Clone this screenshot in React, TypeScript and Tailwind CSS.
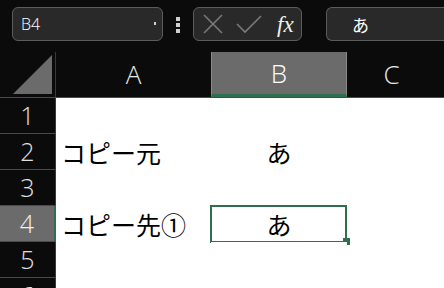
import React from 'react';

const jp = { fontFamily: '"Noto Sans CJK JP", "Noto Sans", sans-serif' };
const latin = { fontFamily: '"Open Sans", "Noto Sans", sans-serif' };

const rows = [
  { n: 1, a: '', b: '' },
  { n: 2, a: 'コピー元', b: 'あ' },
  { n: 3, a: '', b: '' },
  { n: 4, a: 'コピー先①', b: 'あ' },
  { n: 5, a: '', b: '' },
  { n: 6, a: '', b: '' },
];

export default function App() {
  return (
    <div className="w-[444px] h-[288px] overflow-hidden bg-[#0b0b0b] flex flex-col" style={jp}>
      {/* formula bar */}
      <div className="h-[52px] shrink-0 flex items-start pt-[7px] pl-[12px]">
        <div className="w-[151px] h-[34px] rounded-md border border-[#5c5c5c] bg-[#292929] flex items-center pl-[8px] pr-[6px] justify-between">
          <span className="text-white text-[16px] leading-none font-light" style={latin}>B4</span>
          <span className="w-[2px] h-[3px] bg-[#d0d0d0] mt-[-2px]" />
        </div>
        <div className="ml-[13px] mt-[10px] flex flex-col gap-[2px]">
          <span className="w-[4px] h-[4px] bg-[#cfcfcf]" />
          <span className="w-[4px] h-[4px] bg-[#cfcfcf]" />
          <span className="w-[4px] h-[4px] bg-[#cfcfcf]" />
        </div>
        <div className="ml-[13px] w-[109px] h-[34px] rounded-md border border-[#5c5c5c] bg-[#292929] flex items-center pl-[9px]">
          <svg width="20" height="20" viewBox="0 0 20 20" className="shrink-0">
            <path d="M1 1 L19 19 M19 1 L1 19" stroke="#7a7a7a" strokeWidth="1.6" fill="none" />
          </svg>
          <svg width="26" height="20" viewBox="0 0 26 20" className="ml-[13px] shrink-0">
            <path d="M1 10 L9 18 L25 2" stroke="#7a7a7a" strokeWidth="1.6" fill="none" />
          </svg>
          <span className="ml-[15px] text-[#f0f0f0] italic text-[23px] leading-none" style={{ fontFamily: '"Liberation Serif", serif' }}>fx</span>
        </div>
        <div className="ml-[24px] flex-1 h-[34px] rounded-l-md border border-r-0 border-[#5c5c5c] bg-[#292929] flex items-center pl-[25px]">
          <span className="text-white text-[17px] leading-none">あ</span>
        </div>
      </div>

      {/* column headers */}
      <div className="h-[46px] shrink-0 grid grid-cols-[56px_155px_136px_1fr] border-b border-[#4a4a4a]">
        <div className="border-r border-[#3a3a3a] flex items-end justify-end pr-[3px] pb-[3px]">
          <svg width="39" height="39" viewBox="0 0 39 39">
            <polygon points="39,0 39,39 0,39" fill="#6b6b6b" />
          </svg>
        </div>
        <div className="flex items-center justify-center text-[#e8e8e8] text-[26px] font-light" style={latin}>A</div>
        <div className="bg-[#6b6b6b] border-x border-[#8a8a8a] border-b-[3px] border-b-[#2e6f4d] flex items-center justify-center text-white text-[26px] font-light" style={latin}>B</div>
        <div className="flex items-center justify-center text-[#e8e8e8] text-[26px] pr-[8px] font-light" style={latin}>C</div>
      </div>

      {/* rows */}
      <div className="flex-1 flex flex-col">
        {rows.map(r => {
          const sel = r.n === 4;
          return (
            <div key={r.n} className="h-[36px] shrink-0 grid grid-cols-[56px_155px_136px_1fr]">
              <div
                className={
                  sel
                    ? 'bg-[#6b6b6b] border-r-2 border-[#2e6f4d] border-b border-b-[#4a4a4a] flex items-center justify-center text-[#f0f0f0] text-[25px] leading-none font-light'
                    : 'bg-[#0b0b0b] border-r border-[#3a3a3a] border-b border-b-[#4a4a4a] flex items-center justify-center text-[#e0e0e0] text-[25px] leading-none font-light'
                }
                style={latin}
              >
                {r.n}
              </div>
              <div className="bg-white flex items-center pl-[5px] text-black text-[25px] leading-none whitespace-nowrap">{r.a}</div>
              <div className="bg-white relative flex items-center justify-center text-black text-[25px] leading-none">
                {r.b}
                {sel && (
                  <>
                    <div className="absolute left-[-1px] top-[-1px] right-[0px] bottom-[-1px] border-2 border-[#2e6f4d]" />
                    <div className="absolute right-[-3px] bottom-[-3px] w-[7px] h-[7px] bg-[#2e6f4d]" />
                  </>
                )}
              </div>
              <div className="bg-white" />
            </div>
          );
        })}
      </div>
    </div>
  );
}
